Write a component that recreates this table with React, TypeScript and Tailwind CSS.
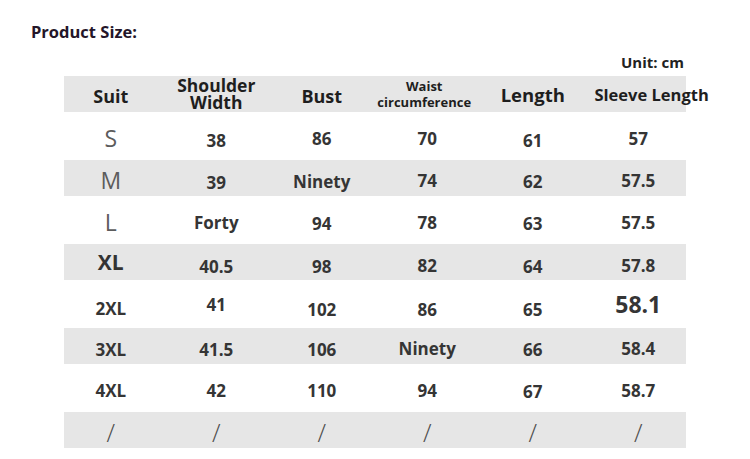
type Cell = { text: string; cls?: string };

const num = "text-[17px] font-bold text-[#353535]";
const letter = "text-[23px] font-normal text-[#5c5c5c]";
const slash = "text-[25px] font-light text-[#4d4d4d]";

const rows: { gray: boolean; h: string; cells: Cell[] }[] = [
  {
    gray: false,
    h: "h-[48px]",
    cells: [
      { text: "S", cls: letter },
      { text: "38", cls: num + " translate-y-[2px]" },
      { text: "86", cls: num },
      { text: "70", cls: num },
      { text: "61", cls: num + " translate-y-[2px]" },
      { text: "57", cls: num },
    ],
  },
  {
    gray: true,
    h: "h-[36px]",
    cells: [
      { text: "M", cls: letter },
      { text: "39", cls: num + " translate-y-[2px]" },
      { text: "Ninety", cls: num + " translate-y-[1px]" },
      { text: "74", cls: num },
      { text: "62", cls: num + " translate-y-[1px]" },
      { text: "57.5", cls: num },
    ],
  },
  {
    gray: false,
    h: "h-[48px]",
    cells: [
      { text: "L", cls: letter },
      { text: "Forty", cls: num },
      { text: "94", cls: num + " translate-y-[1px]" },
      { text: "78", cls: num },
      { text: "63", cls: num + " translate-y-[1px]" },
      { text: "57.5", cls: num },
    ],
  },
  {
    gray: true,
    h: "h-[36px]",
    cells: [
      { text: "XL", cls: "text-[21px] font-bold text-[#333] -translate-y-[2px]" },
      { text: "40.5", cls: num + " translate-y-[2px]" },
      { text: "98", cls: num + " translate-y-[2px]" },
      { text: "82", cls: num + " translate-y-[1px]" },
      { text: "64", cls: num + " translate-y-[2px]" },
      { text: "57.8", cls: num + " translate-y-[1px]" },
    ],
  },
  {
    gray: false,
    h: "h-[48px]",
    cells: [
      { text: "2XL", cls: num + " translate-y-[2px]" },
      { text: "41", cls: num + " -translate-y-[2px]" },
      { text: "102", cls: num + " translate-y-[3px]" },
      { text: "86", cls: num + " translate-y-[3px]" },
      { text: "65", cls: num + " translate-y-[3px]" },
      { text: "58.1", cls: "text-[23px] font-bold text-[#353535] -translate-y-[2px]" },
    ],
  },
  {
    gray: true,
    h: "h-[36px]",
    cells: [
      { text: "3XL", cls: num + " translate-y-[1px]" },
      { text: "41.5", cls: num + " translate-y-[1px]" },
      { text: "106", cls: num + " translate-y-[1px]" },
      { text: "Ninety", cls: num },
      { text: "66", cls: num + " translate-y-[1px]" },
      { text: "58.4", cls: num },
    ],
  },
  {
    gray: false,
    h: "h-[48px]",
    cells: [
      { text: "4XL", cls: num },
      { text: "42", cls: num },
      { text: "110", cls: num },
      { text: "94", cls: num },
      { text: "67", cls: num + " translate-y-[1px]" },
      { text: "58.7", cls: num },
    ],
  },
  {
    gray: true,
    h: "h-[36px]",
    cells: [
      { text: "/", cls: slash },
      { text: "/", cls: slash },
      { text: "/", cls: slash },
      { text: "/", cls: slash },
      { text: "/", cls: slash },
      { text: "/", cls: slash },
    ],
  },
];

function Row({ gray, h, children }: { gray: boolean; h: string; children: React.ReactNode }) {
  return (
    <div className={`ml-[6px] mr-[5px] ${h} ${gray ? "bg-[#e6e6e6]" : "bg-white"}`}>
      <div className="-ml-[6px] -mr-[5px] h-full grid grid-cols-6 items-center pt-[4px]">{children}</div>
    </div>
  );
}

export default function App() {
  return (
    <div className="w-[750px] h-[459px] bg-white font-['Open_Sans',sans-serif] overflow-hidden">
      <div className="pt-[21px] pl-[31px] text-[16.5px] leading-[22px] font-bold text-[#241629]">Product Size:</div>
      <div className="mt-[9px] pl-[621px] text-[15px] leading-[20px] font-bold text-[#222]">Unit: cm</div>

      <div className="mt-[4px] ml-[58px] w-[633px]">
        <div className="ml-[6px] mr-[5px] h-[36px] bg-[#e6e6e6]">
          <div className="-ml-[6px] -mr-[5px] h-full grid grid-cols-6 items-center text-center text-[#1e1e1e] font-bold">
            <div className="text-[18px] leading-[20px] translate-y-[2px]">Suit</div>
            <div className="text-[17.5px] leading-[17px]">
              Shoulder
              <br />
              Width
            </div>
            <div className="text-[18px] leading-[20px] translate-y-[2px]">Bust</div>
            <div className="text-[13px] leading-[16px] -translate-x-[3px]">
              Waist
              <br />
              circumference
            </div>
            <div className="text-[18.5px] leading-[20px] translate-y-[1px]">Length</div>
            <div className="text-[16.5px] leading-[20px] whitespace-nowrap translate-x-[9px] translate-y-[1px]">Sleeve Length</div>
          </div>
        </div>

        {rows.map((r, i) => (
          <Row key={i} gray={r.gray} h={r.h}>
            {r.cells.map((c, j) => (
              <div key={j} className={`text-center leading-none ${c.cls ?? ""}`}>
                {c.text}
              </div>
            ))}
          </Row>
        ))}
      </div>
    </div>
  );
}
